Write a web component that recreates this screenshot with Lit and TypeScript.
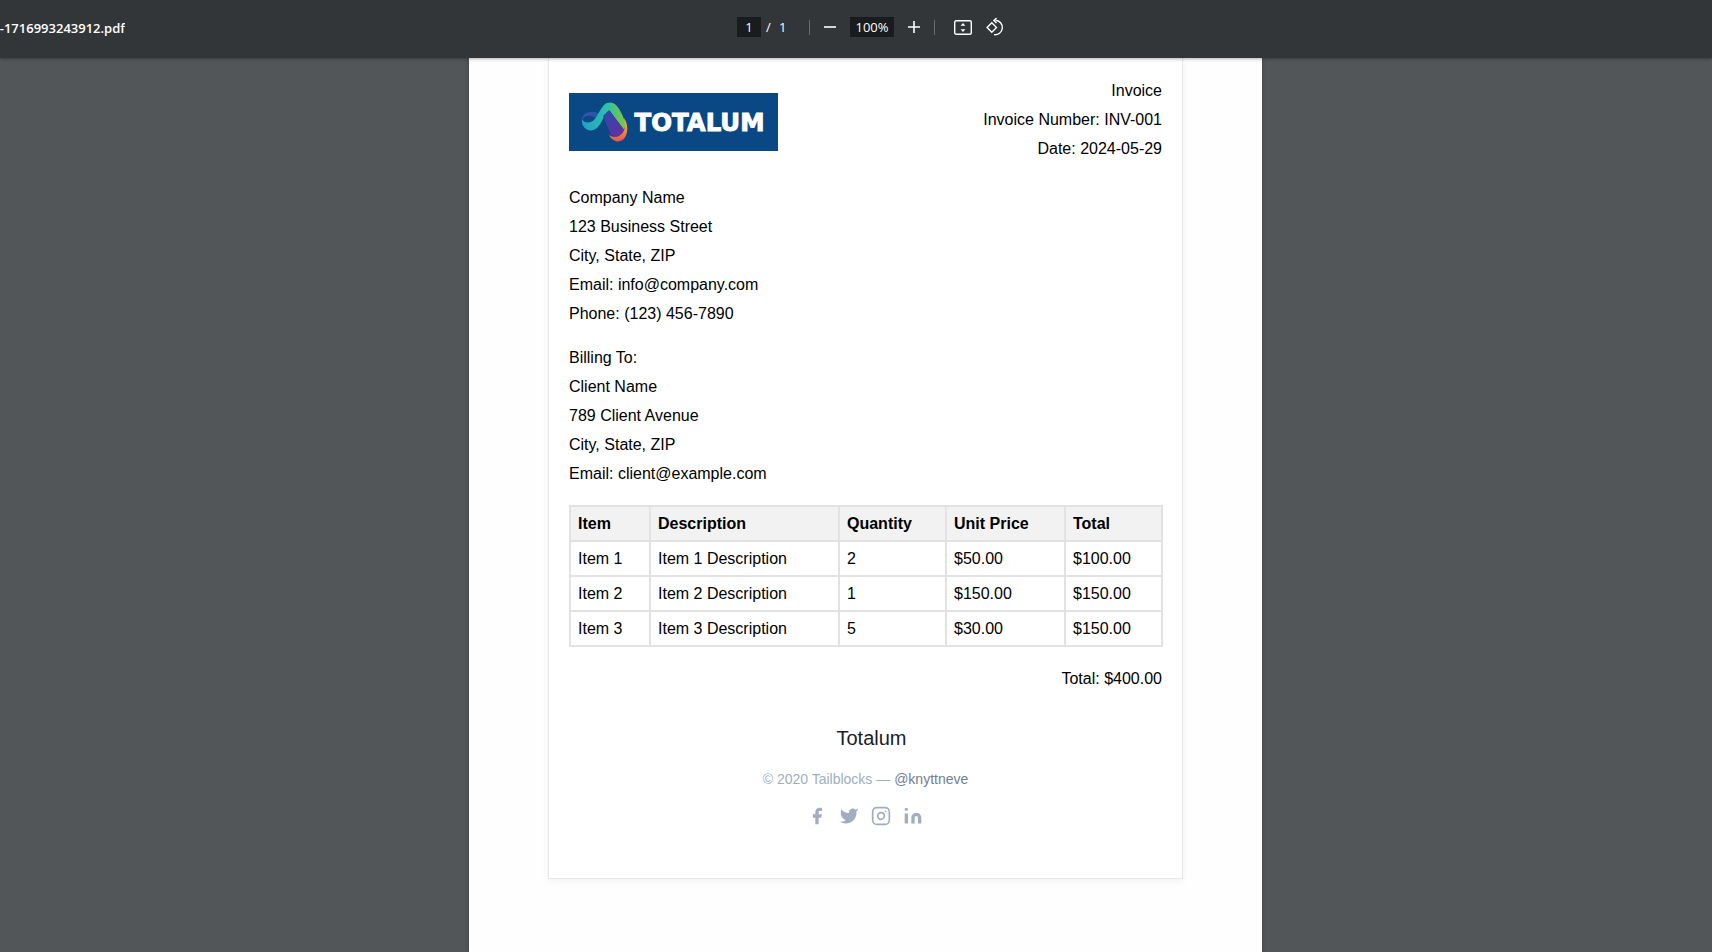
import { LitElement, html, css } from "lit";
import { customElement } from "lit/decorators.js";

const rows = [
  ["Item 1", "Item 1 Description", "2", "$50.00", "$100.00"],
  ["Item 2", "Item 2 Description", "1", "$150.00", "$150.00"],
  ["Item 3", "Item 3 Description", "5", "$30.00", "$150.00"],
];

@customElement("app-root")
export class AppRoot extends LitElement {
  static styles = css`
    :host { display: flex; flex-direction: column; height: 952px; overflow: hidden; background: #525659; font-family: "Liberation Sans", Arial, sans-serif; color: #000; }
    .toolbar { flex: none; height: 58px; box-sizing: border-box; padding-bottom: 4px; background: #323639; box-shadow: 0 1px 3px rgba(0,0,0,.3); position: relative; z-index: 2; display: grid; grid-template-columns: 125px 612px 1fr; align-items: center; color: #fff; font-family: "Open Sans", sans-serif; font-size: 13px; }
    .name { display: flex; justify-content: flex-end; overflow: hidden; white-space: nowrap; font-weight: 600; font-size: 13px; padding-top: 2px; }
    .controls { grid-column: 3; display: flex; align-items: center; height: 20px; }
    .box { background: #191b1c; height: 20px; display: flex; align-items: center; justify-content: center; }
    .pg { width: 24px; }
    .slash { margin-left: 5px; width: 13px; }
    .tot { width: 30px; }
    .sep { width: 1px; height: 15px; background: #6a6d70; }
    .zoomv { width: 44px; }
    .ic { display: block; fill: none; stroke: #fff; overflow: visible; }
    .main { flex: 1; min-height: 0; display: grid; grid-template-columns: 469px 793px 1fr; }
    .page { grid-column: 2; background: #fefefe; box-shadow: 0 0 4px rgba(0,0,0,.25); padding: 0 0 0 79px; }
    .card { width: 635px; box-sizing: border-box; height: 821px; background: #fff; border: 1px solid #e6e6e6; border-top: none; box-shadow: 0 2px 8px rgba(0,0,0,.05); padding: 18px 20px 0; font-size: 16px; line-height: 29px; }
    .head { display: flex; justify-content: space-between; }
    .logo { display: block; margin-top: 17px; }
    .right { text-align: right; }
    .block { margin-top: 15px; }
    .first { margin-top: 20px; }
    table { border-collapse: collapse; table-layout: fixed; width: 592px; margin-top: 17px; line-height: 17px; }
    th, td { border: 2px solid #e2e2e2; padding: 8px 8px 8px 7px; text-align: left; height: 17px; }
    th { background: #f2f2f2; font-weight: 700; }
    .total { text-align: right; margin-top: 17px; }
    .brand { text-align: center; padding-left: 12px; font-size: 20px; line-height: 28px; margin-top: 31px; color: #1a202c; }
    .copy { text-align: center; font-size: 14px; line-height: 24px; color: #a0aec0; margin-top: 15px; }
    .copy span { color: #718096; }
    .social { display: flex; justify-content: center; gap: 12px; margin-top: 15px; padding-right: 2px; color: #a0aec0; }
    .social svg { display: block; width: 20px; height: 20px; }
  `;

  private logo() {
    return html`<svg class="logo" width="209" height="58" viewBox="0 0 209 58">
      <defs>
        <linearGradient id="g1" x1="0" y1="0" x2="1" y2="0"><stop offset="0" stop-color="#229ec9"/><stop offset=".55" stop-color="#2bc0ac"/><stop offset="1" stop-color="#82c63c"/></linearGradient>
        <linearGradient id="g2" x1="0" y1="0" x2="1" y2="1"><stop offset="0" stop-color="#2a4ca8"/><stop offset="1" stop-color="#6d2aa6"/></linearGradient>
        <linearGradient id="g3" x1="0" y1="0" x2="0" y2="1"><stop offset="0" stop-color="#d9bf3a"/><stop offset=".55" stop-color="#f48c38"/><stop offset="1" stop-color="#e9505c"/></linearGradient>
      </defs>
      <rect width="209" height="58" fill="#094785"/>
      <path d="M21 19C16 19 13 23 13 27C15 23 19 22 23 23C26 24 28 27 29 29L33 23C30 20 26 18 21 19Z" fill="#2f55a8"/>
      <path d="M13 26C12 33 17 37.5 22 37.5C29 37.5 32 29 36 22C38 19 40 18 41 18L55 37L57 31C54 23 51 16 47 12C44 9 39 8.5 35 12C30 18 28 24 25 27C22 30 15 31 13 26Z" fill="url(#g1)"/>
      <path d="M34 23L40 17L56 38C53 42 51 43.5 48 43.5L42 42Z" fill="url(#g2)"/>
      <path d="M55 25C58 29 59 35 58 39C57 45 53 49 48 48.5C45 48 42 46 40 42C43 44 47 44.5 50 43C54 41 56.5 36 56 31Z" fill="url(#g3)"/>
      <text x="65.5" y="37.7" font-family="'DejaVu Sans'" font-weight="700" font-size="24" textLength="130" lengthAdjust="spacingAndGlyphs" stroke="#fff" stroke-width=".9" fill="#fff">TOTALUM</text>
    </svg>`;
  }

  render() {
    return html`
      <div class="toolbar">
        <div class="name"><span>totalum-invoice-1716993243912.pdf</span></div>
        <div class="controls">
          <div class="box pg">1</div>
          <div class="slash">/</div>
          <div class="tot">1</div>
          <div class="sep"></div>
          <svg class="ic" style="margin:0 14px" width="12" height="12" viewBox="0 0 12 12" stroke-width="1.6"><path d="M0 6h12"/></svg>
          <div class="box zoomv">100%</div>
          <svg class="ic" style="margin:0 14px" width="12" height="12" viewBox="0 0 12 12" stroke-width="1.6"><path d="M0 6h12M6 0v12"/></svg>
          <div class="sep"></div>
          <svg class="ic" style="margin-left:19px" width="18" height="15" viewBox="0 0 18 15" stroke-width="1.4"><rect x=".7" y=".7" width="16.6" height="13.6" rx="1.5"/><path d="M9 3l-2.4 2.8h4.8zM9 12l-2.4-2.8h4.8z" fill="#fff" stroke="none"/></svg>
          <svg class="ic" style="margin-left:14px" width="18" height="18" viewBox="0 0 18 18" stroke-width="1.4"><path d="M5.8 4.8L10.5 9.5 5.8 14.2 1.1 9.5Z"/><path d="M9.5 2.3a7.2 7.2 0 1 1-1.5 14.3"/><path d="M10.5 0L7.9 2.4l2.6 2.6"/></svg>
        </div>
      </div>
      <div class="main">
        <div class="page">
          <div class="card">
            <div class="head">
              ${this.logo()}
              <div class="right"><div>Invoice</div><div>Invoice Number: INV-001</div><div>Date: 2024-05-29</div></div>
            </div>
            <div class="block first"><div>Company Name</div><div>123 Business Street</div><div>City, State, ZIP</div><div>Email: info@company.com</div><div>Phone: (123) 456-7890</div></div>
            <div class="block"><div>Billing To:</div><div>Client Name</div><div>789 Client Avenue</div><div>City, State, ZIP</div><div>Email: client@example.com</div></div>
            <table>
              <colgroup><col style="width:80px"/><col style="width:189px"/><col style="width:107px"/><col style="width:119px"/><col style="width:97px"/></colgroup>
              <thead><tr><th>Item</th><th>Description</th><th>Quantity</th><th>Unit Price</th><th>Total</th></tr></thead>
              <tbody>${rows.map(r => html`<tr>${r.map(c => html`<td>${c}</td>`)}</tr>`)}</tbody>
            </table>
            <div class="total">Total: $400.00</div>
            <div class="brand">Totalum</div>
            <div class="copy">© 2020 Tailblocks — <span>@knyttneve</span></div>
            <div class="social">
              <svg viewBox="0 0 24 24" fill="currentColor"><path d="M18 2h-3a5 5 0 00-5 5v3H7v4h3v8h4v-8h3l1-4h-4V7a1 1 0 011-1h3z"/></svg>
              <svg viewBox="0 0 24 24" fill="currentColor"><path d="M23 3a10.9 10.9 0 01-3.14 1.53 4.48 4.48 0 00-7.86 3v1A10.66 10.66 0 013 4s-4 9 5 13a11.64 11.64 0 01-7 2c9 5 20 0 20-11.5a4.5 4.5 0 00-.08-.83A7.72 7.72 0 0023 3z"/></svg>
              <svg viewBox="0 0 24 24" fill="none" stroke="currentColor" stroke-width="2" stroke-linecap="round" stroke-linejoin="round"><rect width="20" height="20" x="2" y="2" rx="5" ry="5"/><path d="M16 11.37A4 4 0 1112.63 8 4 4 0 0116 11.37zm1.5-4.87h.01"/></svg>
              <svg viewBox="0 0 24 24" fill="currentColor"><path d="M16 8a6 6 0 016 6v7h-4v-7a2 2 0 00-2-2 2 2 0 00-2 2v7h-4v-7a6 6 0 016-6zM2 9h4v12H2z"/><circle cx="4" cy="4" r="2"/></svg>
            </div>
          </div>
        </div>
      </div>
    `;
  }
}
